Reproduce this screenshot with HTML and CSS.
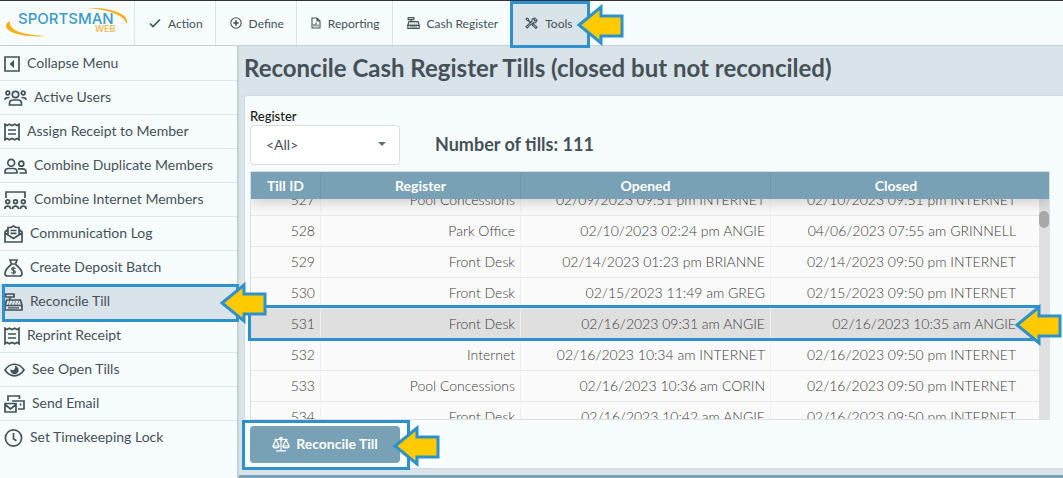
FILE: index.html
```html
<!DOCTYPE html>
<html lang="en">
<head>
    <meta charset="UTF-8">
    <meta name="viewport" content="width=device-width, initial-scale=1.0">
    <title>Reconcile Cash Register Tills</title>
    <link rel="stylesheet" href="styles.css">
</head>
<body>
    <!-- shapes used more than once -->
    <svg class="sprite" width="0" height="0">
        <symbol id="receipt" viewBox="0 0 16 18">
            <path d="M1 1.2 L3 2.6 L5.3 1.2 L8 2.6 L10.7 1.2 L13 2.6 L15 1.2 V16.8 L13 15.4 L10.7 16.8 L8 15.4 L5.3 16.8 L3 15.4 L1 16.8 Z M4 7 H12 M4 11 H12"/>
        </symbol>
        <symbol id="register" viewBox="0 0 19 18">
            <path d="M1.5 1 H10 V4 H1.5 Z M5.8 4 V7 M2.5 7 H16.5 L18 12.5 H1 Z M1 12.5 H18 V17 H1 Z"/>
            <path class="thin" d="M4 14.8 H15 M5 9 H6 M8 9 H9 M11 9 H12 M14 9 H15 M4 11 H5 M7 11 H8 M10 11 H11 M13 11 H14"/>
        </symbol>
        <symbol id="arrow" viewBox="0 0 48 42">
            <path d="M3 21 L25 3 V12 H46 V32 H25 V39 Z"/>
        </symbol>
    </svg>

    <header class="topbar">
        <a class="logo" href="#" aria-label="Sportsman Web">
            <svg width="134" height="44" viewBox="0 0 134 44">
                <path class="swoosh" d="M88 7 C108 6 130 12 127 23 C123 13 108 9 88 7 Z"/>
                <path class="swoosh" d="M10 20 C8 30 25 34 46 35 C24 37 1 31 7 22 Z"/>
                <text class="logo-name" x="18" y="23">SPORTSMAN</text>
                <text class="logo-web" x="95" y="31">WEB</text>
            </svg>
        </a>
        <nav class="menu">
            <a href="#">
                <svg class="icon" width="12" height="12" viewBox="0 0 12 12"><path class="heavy" d="M1 6.5 L4 9.5 L11 2.5"/></svg>
                Action
            </a>
            <a href="#">
                <svg class="icon" width="12" height="12" viewBox="0 0 12 12"><circle cx="6" cy="6" r="5.2"/><path class="heavy" d="M6 3.3 V8.7 M3.3 6 H8.7"/></svg>
                Define
            </a>
            <a href="#">
                <svg class="icon" width="10" height="12" viewBox="0 0 10 12"><path d="M1 1 H6 L9 4 V11 H1 Z M6 1 V4 H9 M3 9.5 V7 M5 9.5 V5.5 M7 9.5 V7.5"/></svg>
                Reporting
            </a>
            <a href="#">
                <svg class="icon bold" width="13" height="12"><use href="#register"/></svg>
                Cash Register
            </a>
            <a class="active" href="#">
                <svg class="icon" width="13" height="12" viewBox="0 0 13 12"><path d="M1 1 L3.2 1.6 L4 3.6 L6.2 5.6 M1 1 L1.8 3.2 L3.6 4 L5.6 6.2 M7.4 7 L8.4 6.8 L12 10.2 L10.8 11.4 L7.2 8 Z M5 8 L2.4 11 L1 9.8 L7 4.2 C6.4 2 8.4 0.6 10.2 1.2 L8.8 2.8 L10 4 L11.7 2.5 C12.2 4.6 10.6 6.3 8.4 5.6 L5 8.4"/></svg>
                Tools
                <span class="mark mark-tools"></span>
                <svg class="arrow arrow-tools" width="48" height="42"><use href="#arrow"/></svg>
            </a>
        </nav>
    </header>

    <div class="layout">
        <ul class="sidebar">
            <li><a href="#">
                <svg class="icon" width="16" height="18" viewBox="0 0 16 18"><path d="M1 2 H15 V16 H1 Z"/><path class="solid" d="M10 5 V13 L5.5 9 Z"/></svg>
                Collapse Menu
            </a></li>
            <li><a href="#">
                <svg class="icon" width="23" height="18" viewBox="0 0 23 18"><circle cx="11.5" cy="5.5" r="3.2"/><circle cx="3.8" cy="4" r="1.8"/><circle cx="19.2" cy="4" r="1.8"/><path d="M5.5 16 V14.5 C5.5 12 7 11 9 11 H14 C16 11 17.5 12 17.5 14.5 V16 Z M1 11 C1 9 2 8.5 5.5 8.5 M22 11 C22 9 21 8.5 17.5 8.5"/></svg>
                Active Users
            </a></li>
            <li><a href="#">
                <svg class="icon" width="16" height="18"><use href="#receipt"/></svg>
                Assign Receipt to Member
            </a></li>
            <li><a href="#">
                <svg class="icon" width="23" height="18" viewBox="0 0 23 18"><circle cx="7.2" cy="5.7" r="3.4"/><circle cx="17.3" cy="6.7" r="2.5"/><path d="M1 16 V15 C1 12.5 2.5 11.5 4.5 11.5 H9.5 C11.7 11.5 13 12.5 13 15 V16 Z M14 11.8 H18.5 C21 11.8 22 13 22 15 V16 H15.5"/></svg>
                Combine Duplicate Members
            </a></li>
            <li><a href="#">
                <svg class="icon" width="23" height="18" viewBox="0 0 23 18"><path d="M2 7 V1 H21 V7"/><circle cx="3.7" cy="10.8" r="1.9"/><circle cx="11.5" cy="10.8" r="1.9"/><circle cx="19.3" cy="10.8" r="1.9"/><path d="M0.8 18 C0.8 14.2 6.6 14.2 6.6 18 M8.6 18 C8.6 14.2 14.4 14.2 14.4 18 M16.4 18 C16.4 14.2 22.2 14.2 22.2 18"/></svg>
                Combine Internet Members
            </a></li>
            <li><a href="#">
                <svg class="icon" width="19" height="18" viewBox="0 0 19 18"><path d="M4 9 V2.5 H7 L9.5 1 L12 2.5 H15 V9 M4 4.5 L1 7 V17 H18 V7 L15 4.5 M1 8 L9.5 13.5 L18 8 M6.5 5.5 H12.5 M6.5 8.3 H12.5"/></svg>
                Communication Log
            </a></li>
            <li><a href="#">
                <svg class="icon" width="19" height="18" viewBox="0 0 19 18"><path d="M6 1 H13 L11.5 5 H7.5 Z M7.3 5.5 C3 9 1 12 1 14.5 C1 16.3 2 17 3.5 17 H15.5 C17 17 18 16.3 18 14.5 C18 12 16 9 11.7 5.5"/><path class="thin" d="M11.5 9.5 C9.5 8.3 7.5 8.8 7.6 10 C7.7 11.8 11.5 11 11.5 13 C11.5 14.4 9 14.6 7.4 13.5 M9.5 7.8 V15.5"/></svg>
                Create Deposit Batch
            </a></li>
            <li class="active"><a href="#">
                <svg class="icon" width="19" height="18"><use href="#register"/></svg>
                Reconcile Till
                <span class="mark mark-side"></span>
                <svg class="arrow arrow-side" width="48" height="42"><use href="#arrow"/></svg>
            </a></li>
            <li><a href="#">
                <svg class="icon" width="16" height="18"><use href="#receipt"/></svg>
                Reprint Receipt
            </a></li>
            <li><a href="#">
                <svg class="icon" width="21" height="18" viewBox="0 0 21 18"><path d="M1 9 C6 1.3 15 1.3 20 9 C15 16.7 6 16.7 1 9 Z"/><path class="solid" d="M10.5 4.8 A4.2 4.2 0 1 1 6.4 8 A2.2 2.2 0 0 0 10.5 4.8 Z"/></svg>
                See Open Tills
            </a></li>
            <li><a href="#">
                <svg class="icon" width="21" height="18" viewBox="0 0 21 18"><path d="M1 8.5 H12 V17 H1 Z M1 9.5 L6.5 13.8 L12 9.5 M4 6 V1 H15.5 V4 M8 6 H20 V14 H14 M16.5 8.5 V10.5"/></svg>
                Send Email
            </a></li>
            <li><a href="#">
                <svg class="icon" width="19" height="18" viewBox="0 0 19 18"><circle cx="9.5" cy="9" r="8.1"/><path d="M9.5 4 V9.7 L12.5 11.7"/></svg>
                Set Timekeeping Lock
            </a></li>
        </ul>

        <main class="content">
            <h1>Reconcile Cash Register Tills (closed but not reconciled)</h1>
            <section class="card">
                <div class="filters">
                    <div class="field">
                        <label for="register-select">Register</label>
                        <div class="select">
                            <select id="register-select">
                                <option>&lt;All&gt;</option>
                            </select>
                        </div>
                    </div>
                    <h2>Number of tills: 111</h2>
                </div>

                <div class="grid">
                    <div class="scroller" id="scroller">
                        <table>
                            <thead>
                                <tr>
                                    <th class="col-id">Till ID</th>
                                    <th class="col-register">Register</th>
                                    <th class="col-opened">Opened</th>
                                    <th>Closed</th>
                                </tr>
                            </thead>
                            <tbody>
                                <tr><td>527</td><td>Pool Concessions</td><td>02/09/2023 09:51 pm INTERNET</td><td>02/10/2023 09:51 pm INTERNET</td></tr>
                                <tr><td>528</td><td>Park Office</td><td>02/10/2023 02:24 pm ANGIE</td><td>04/06/2023 07:55 am GRINNELL</td></tr>
                                <tr><td>529</td><td>Front Desk</td><td>02/14/2023 01:23 pm BRIANNE</td><td>02/14/2023 09:50 pm INTERNET</td></tr>
                                <tr><td>530</td><td>Front Desk</td><td>02/15/2023 11:49 am GREG</td><td>02/15/2023 09:50 pm INTERNET</td></tr>
                                <tr class="selected"><td>531</td><td>Front Desk</td><td>02/16/2023 09:31 am ANGIE</td><td>02/16/2023 10:35 am ANGIE</td></tr>
                                <tr><td>532</td><td>Internet</td><td>02/16/2023 10:34 am INTERNET</td><td>02/16/2023 09:50 pm INTERNET</td></tr>
                                <tr><td>533</td><td>Pool Concessions</td><td>02/16/2023 10:36 am CORIN</td><td>02/16/2023 09:50 pm INTERNET</td></tr>
                                <tr><td>534</td><td>Front Desk</td><td>02/16/2023 10:42 am ANGIE</td><td>02/16/2023 09:50 pm INTERNET</td></tr>
                            </tbody>
                        </table>
                    </div>
                    <div class="track"><div class="thumb"></div></div>
                    <span class="mark mark-row"></span>
                    <svg class="arrow arrow-row" width="48" height="42"><use href="#arrow"/></svg>
                </div>

                <div class="actions">
                    <button type="button">
                        <svg class="icon" width="18" height="16" viewBox="0 0 18 16"><path d="M9 1 V14.5 M4 14.8 H14 M2.5 3.5 H15.5 M4 3.5 L1 10 H7 Z M14 3.5 L11 10 H17 Z M1 10 C1 12.6 7 12.6 7 10 M11 10 C11 12.6 17 12.6 17 10"/><circle cx="9" cy="2.8" r="1.4"/></svg>
                        Reconcile Till
                    </button>
                    <span class="mark mark-button"></span>
                    <svg class="arrow arrow-button" width="48" height="42"><use href="#arrow"/></svg>
                </div>
            </section>
            <footer class="footer"></footer>
        </main>
    </div>

    <script>
        document.getElementById('scroller').scrollTop = 14;
    </script>
</body>
</html>
```
FILE: styles.css
```css
* {
    box-sizing: border-box;
}

body {
    margin: 0;
    min-height: 100vh;
    display: flex;
    flex-direction: column;
    overflow: hidden;
    background: #f7fcff;
    color: #465157;
    font-family: Lato, "Liberation Sans", sans-serif;
    font-size: 14px;
}

a {
    color: inherit;
    text-decoration: none;
}

.sprite {
    position: absolute;
}

.icon {
    flex: none;
    fill: none;
    stroke: #43525a;
    stroke-width: 1.7;
}

.icon .solid {
    fill: #43525a;
    stroke: none;
}

.thin {
    stroke-width: 1.2;
}

/* top bar */
.topbar {
    display: flex;
    height: 46px;
    border-top: 1px solid #343238;
    border-bottom: 1px solid #c6cfd5;
}

.logo {
    width: 135px;
    border-right: 1px solid #dde3e7;
}

.swoosh {
    fill: #f9ae16;
}

.logo-name {
    fill: #3c9bc9;
    font: 500 15px Inter, sans-serif;
}

.logo-web {
    fill: #f0b440;
    font: 500 9px Inter, sans-serif;
}

.menu {
    display: flex;
    font-size: 12px;
}

.menu a {
    position: relative;
    display: flex;
    align-items: center;
    gap: 7px;
    padding: 0 12px 0 14px;
    border-right: 1px solid #dde3e7;
}

.menu a.active {
    padding-right: 15px;
    background: #d9e3ea;
}

.menu .icon {
    stroke-width: 1.1;
}

.menu .icon.bold {
    stroke-width: 1.8;
}

.menu .heavy {
    stroke-width: 1.7;
}

/* sidebar */
.layout {
    flex: 1;
    display: flex;
}

.sidebar {
    flex: none;
    width: 238px;
    margin: 0;
    padding: 1px 0 0;
    list-style: none;
    border-right: 1px solid #c3ccd2;
}

.sidebar li a {
    position: relative;
    display: flex;
    align-items: center;
    gap: 7px;
    height: 34px;
    padding: 0 0 2px 4px;
    border-bottom: 1px solid #dde3e7;
}

.sidebar li:last-child a {
    border-color: transparent;
}

.sidebar li.active {
    background: #d9e3ea;
}

.sidebar .icon {
    margin-top: 3px;
}

/* content */
.content {
    flex: 1;
    min-width: 0;
    display: flex;
    flex-direction: column;
    background: #d9e3ea;
    border-left: 1px solid #c9d3da;
}

h1 {
    margin: 0;
    padding: 7px 5px 12px;
    font-size: 24px;
    line-height: 30px;
}

.card {
    flex: 1;
    margin-left: 5px;
    padding: 12px 13px 5px 5px;
    background: #f7fcff;
    border: 1px solid #d0d9df;
    border-right: none;
    border-radius: 4px 0 0 4px;
}

.filters {
    display: flex;
    gap: 35px;
}

.field label {
    display: block;
    color: #17191a;
    font-size: 13px;
    font-weight: 500;
    line-height: 17px;
}

.select {
    position: relative;
    width: 150px;
}

.select::after {
    content: "";
    position: absolute;
    top: 17px;
    right: 14px;
    border: 4px solid transparent;
    border-top-color: #667077;
}

.select select {
    appearance: none;
    width: 100%;
    height: 40px;
    padding: 0 15px 2px;
    background: #fff;
    border: 1px solid #d9dee1;
    border-radius: 4px;
    color: inherit;
    font-family: inherit;
    font-size: 14px;
}

h2 {
    margin: 16px 0 0;
    font-size: 18px;
    line-height: 40px;
}

/* tills grid */
.grid {
    position: relative;
    margin-top: 6px;
    border: 1px solid #dcdfe1;
}

.scroller {
    height: 247px;
    overflow: hidden;
}

table {
    width: 100%;
    table-layout: fixed;
    border-collapse: separate;
    border-spacing: 0;
    color: #3c3c3c;
    font-size: 14px;
}

th {
    position: sticky;
    top: 0;
    z-index: 2;
    height: 27px;
    padding: 0;
    background: #78a1b5;
    border-right: 1px solid #6f98ac;
    color: #fff;
}

/* one shadow under the whole header row */
thead {
    position: sticky;
    top: 0;
    z-index: 2;
    box-shadow: 0 5px 12px rgba(0, 0, 0, 0.15);
}

.col-id {
    width: 70px;
}

.col-register {
    width: 200px;
}

.col-opened {
    width: 250px;
}

th:last-child {
    padding-right: 28px;
    border-right: none;
}

td {
    height: 31px;
    padding: 0 5px 2px;
    background: #fafafa;
    border-right: 1px solid #f0f0f0;
    border-bottom: 1px solid #e8e8e8;
    font-weight: 300;
    text-align: right;
    white-space: nowrap;
}

td:last-child {
    padding-right: 33px;
    border-right: none;
}

.selected td {
    background: #e0dfdf;
}

.track {
    position: absolute;
    top: 27px;
    right: 0;
    bottom: 0;
    width: 10px;
    padding-top: 12px;
    background: #e0e0e0;
}

.thumb {
    height: 17px;
    border-radius: 5px;
    background: #a8a8a8;
}

.actions {
    position: relative;
    margin-top: 6px;
}

button {
    display: flex;
    align-items: center;
    justify-content: center;
    gap: 6px;
    width: 150px;
    height: 37px;
    padding: 0 6px 2px;
    border: none;
    border-radius: 4px;
    background: #78a1b5;
    color: #fff;
    font-family: inherit;
    font-size: 14px;
    font-weight: bold;
}

button .icon {
    stroke: #fff;
    stroke-width: 1.2;
}

.footer {
    height: 9px;
    background: #d9e3ea;
    border-bottom: 3px solid #78a1b5;
}

/* step highlights */
.mark {
    position: absolute;
    z-index: 3;
    border: 3px solid #2f91cc;
}

.arrow {
    position: absolute;
    z-index: 4;
    fill: #ffca00;
    stroke: #2f91cc;
    stroke-width: 3;
}

.mark-tools {
    inset: 0 -2px -3px -1px;
}

.arrow-tools {
    right: -36px;
    top: 3px;
}

.mark-side {
    inset: -1px -2px -4px 2px;
}

.arrow-side {
    right: -30px;
    top: -3px;
}

.mark-row {
    inset: 133px 9px 78px -3px;
}

.arrow-row {
    right: -13px;
    top: 132px;
}

.mark-button {
    left: -8px;
    top: -6px;
    width: 168px;
    height: 50px;
}

.arrow-button {
    left: 142px;
    top: -1px;
}
```
